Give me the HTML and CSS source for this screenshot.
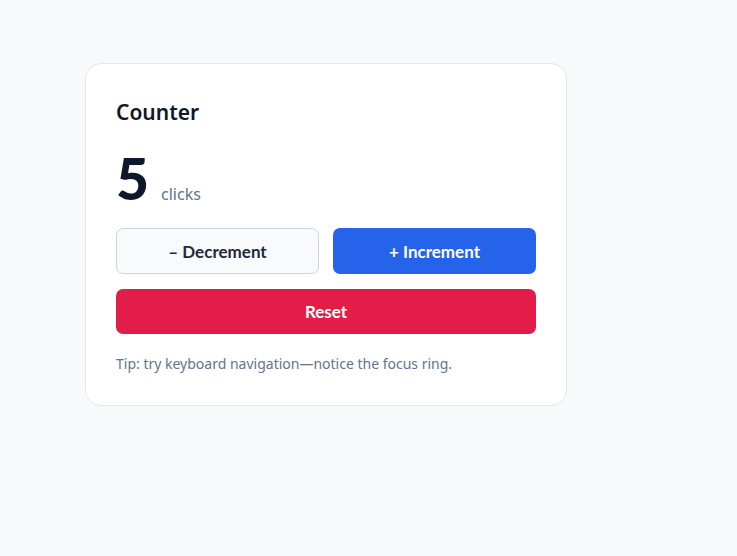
FILE: index.html
```html
<!DOCTYPE html>
<html lang="en">
<head>
<meta charset="utf-8">
<title>Counter</title>
<link rel="stylesheet" href="styles.css">
</head>
<body>
<main class="page">
  <section class="card">
    <h1 class="title">Counter</h1>
    <div class="count-row">
      <span class="count">5</span>
      <span class="unit">clicks</span>
    </div>
    <div class="btn-row">
      <button class="btn btn-secondary">– Decrement</button>
      <button class="btn btn-primary">+ Increment</button>
    </div>
    <button class="btn btn-danger btn-full">Reset</button>
    <p class="tip">Tip: try keyboard navigation—notice the focus ring.</p>
  </section>
</main>
</body>
</html>
```

FILE: styles.css
```css
* { box-sizing: border-box; }
html, body { margin: 0; }
body {
  background: #f8f9fb;
  font-family: "Noto Sans", sans-serif;
  color: #0f172a;
}
.page {
  padding: 63px 0 0 85px;
}
.card {
  width: 482px;
  background: #ffffff;
  border: 1px solid #e2e8f0;
  border-radius: 16px;
  padding: 30px;
}
.title {
  margin: 0;
  font-size: 21px;
  font-weight: 600;
  line-height: 36px;
  color: #0f172a;
}
.count-row {
  display: flex;
  align-items: baseline;
  gap: 12px;
  margin-top: 12px;
}
.count {
  font-family: "Lato", sans-serif;
  font-size: 57px;
  font-weight: 900;
  line-height: 72px;
  color: #0f172a;
}
.unit {
  font-size: 16px;
  color: #64748b;
}
.btn-row {
  display: grid;
  grid-template-columns: 1fr 1fr;
  gap: 14px;
  margin-top: 14px;
}
.btn {
  font-family: "Lato", sans-serif;
  font-size: 17px;
  font-weight: 700;
  height: 46px;
  border-radius: 7px;
  border: 1px solid transparent;
  cursor: pointer;
}
.btn-secondary {
  background: #f8fafc;
  border-color: #cbd5e1;
  color: #1e293b;
}
.btn-primary {
  background: #2563eb;
  color: #ffffff;
}
.btn-danger {
  background: #e11d48;
  color: #ffffff;
}
.btn-full {
  display: block;
  width: 100%;
  height: 45px;
  margin-top: 15px;
}
.tip {
  margin: 19px 0 0;
  font-size: 14px;
  line-height: 22px;
  color: #64748b;
}
```
